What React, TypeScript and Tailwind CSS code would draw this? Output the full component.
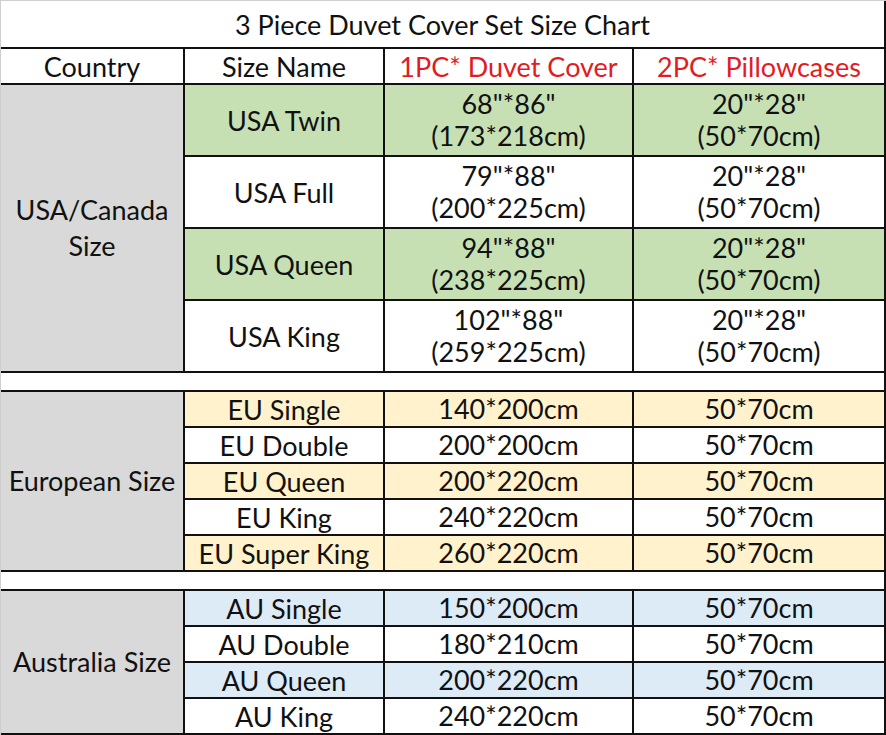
import React from 'react'

type Row = { name: string; duvet: string[]; pillow: string[]; tint: boolean }

type Group = { country: string[]; tint: string; rowH: string; rows: Row[] }

const groups: Group[] = [
  {
    country: ['USA/Canada', 'Size'],
    tint: 'bg-[#c6e0b4]',
    rowH: 'h-[72px]',
    rows: [
      { name: 'USA Twin', duvet: ['68"*86"', '(173*218cm)'], pillow: ['20"*28"', '(50*70cm)'], tint: true },
      { name: 'USA Full', duvet: ['79"*88"', '(200*225cm)'], pillow: ['20"*28"', '(50*70cm)'], tint: false },
      { name: 'USA Queen', duvet: ['94"*88"', '(238*225cm)'], pillow: ['20"*28"', '(50*70cm)'], tint: true },
      { name: 'USA King', duvet: ['102"*88"', '(259*225cm)'], pillow: ['20"*28"', '(50*70cm)'], tint: false },
    ],
  },
  {
    country: ['European Size'],
    tint: 'bg-[#fff2cc]',
    rowH: 'h-[36px]',
    rows: [
      { name: 'EU Single', duvet: ['140*200cm'], pillow: ['50*70cm'], tint: true },
      { name: 'EU Double', duvet: ['200*200cm'], pillow: ['50*70cm'], tint: false },
      { name: 'EU Queen', duvet: ['200*220cm'], pillow: ['50*70cm'], tint: true },
      { name: 'EU King', duvet: ['240*220cm'], pillow: ['50*70cm'], tint: false },
      { name: 'EU Super King', duvet: ['260*220cm'], pillow: ['50*70cm'], tint: true },
    ],
  },
  {
    country: ['Australia Size'],
    tint: 'bg-[#ddebf7]',
    rowH: 'h-[36px]',
    rows: [
      { name: 'AU Single', duvet: ['150*200cm'], pillow: ['50*70cm'], tint: true },
      { name: 'AU Double', duvet: ['180*210cm'], pillow: ['50*70cm'], tint: false },
      { name: 'AU Queen', duvet: ['200*220cm'], pillow: ['50*70cm'], tint: true },
      { name: 'AU King', duvet: ['240*220cm'], pillow: ['50*70cm'], tint: false },
    ],
  },
]

const cell = 'flex flex-col items-center justify-center border-b-2 border-r-2 border-[#111] text-center whitespace-nowrap'

function Lines({ lines }: { lines: string[] }) {
  return (
    <>
      {lines.map((l) => (
        <span key={l} className="block leading-[32px]">{l}</span>
      ))}
    </>
  )
}

export default function App() {
  return (
    <div className="h-[735px] w-[886px] overflow-hidden border-l border-t border-[#cfcfcf] bg-white font-['Lato','Open_Sans',sans-serif] text-[27px] leading-none text-[#111]">
      <div className="grid grid-cols-[184px_200px_249px_252px]">
        <div className={`${cell} col-span-4 h-[48px]`}>3 Piece Duvet Cover Set Size Chart</div>

        <div className={`${cell} h-[36px]`}>Country</div>
        <div className={cell}>Size Name</div>
        <div className={`${cell} text-[#e31b23]`}>1PC* Duvet Cover</div>
        <div className={`${cell} text-[#e31b23]`}>2PC* Pillowcases</div>

        {groups.map((g, gi) => (
          <React.Fragment key={g.country.join(' ')}>
            {gi > 0 && <div className={`${cell} col-span-4 h-[19px]`} />}
            <div
              className={`${cell} bg-[#d9d9d9] ${
                g.rows.length === 4 ? 'row-span-4' : 'row-span-5'
              }`}
            >
              {g.country.map((c) => (
                <span key={c} className="block leading-[36px]">{c}</span>
              ))}
            </div>
            {g.rows.map((r) => {
              const bg = r.tint ? g.tint : 'bg-white'
              return (
                <React.Fragment key={r.name}>
                  <div className={`${cell} ${g.rowH} ${bg}`}>{r.name}</div>
                  <div className={`${cell} ${bg}`}><Lines lines={r.duvet} /></div>
                  <div className={`${cell} ${bg}`}><Lines lines={r.pillow} /></div>
                </React.Fragment>
              )
            })}
          </React.Fragment>
        ))}
      </div>
    </div>
  )
}
